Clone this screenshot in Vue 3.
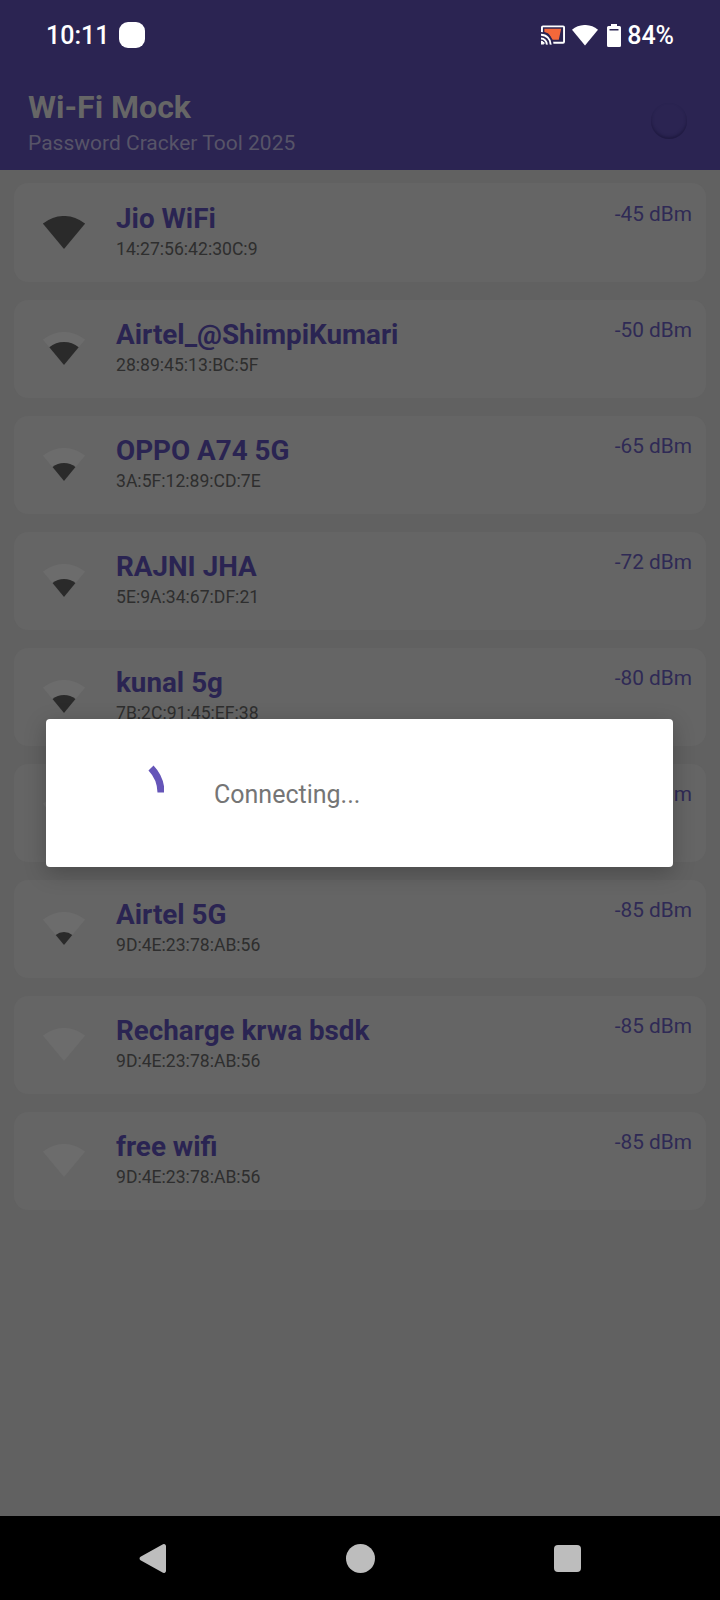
<script setup>
const networks = [
  { name: 'Jio WiFi', mac: '14:27:56:42:30C:9', dbm: -45, level: 33 },
  { name: 'Airtel_@ShimpiKumari', mac: '28:89:45:13:BC:5F', dbm: -50, level: 23 },
  { name: 'OPPO A74 5G', mac: '3A:5F:12:89:CD:7E', dbm: -65, level: 18 },
  { name: 'RAJNI JHA', mac: '5E:9A:34:67:DF:21', dbm: -72, level: 18 },
  { name: 'kunal 5g', mac: '7B:2C:91:45:EF:38', dbm: -80, level: 18 },
  { name: 'Airtel 4G', mac: '9D:4E:23:78:AB:56', dbm: -85, level: 18 },
  { name: 'Airtel 5G', mac: '9D:4E:23:78:AB:56', dbm: -85, level: 13 },
  { name: 'Recharge krwa bsdk', mac: '9D:4E:23:78:AB:56', dbm: -85, level: 0 },
  { name: 'free wifi', mac: '9D:4E:23:78:AB:56', dbm: -85, level: 0 },
];

// fan shape from the bottom tip, r is how far up it reaches
function wedge(r) {
  const dx = (r * 0.64).toFixed(1);
  const dy = (r * 0.77).toFixed(1);
  return `M21 33 L${21 - dx} ${33 - dy} A${r} ${r} 0 0 1 ${21 + Number(dx)} ${33 - dy} Z`;
}
</script>

<template>
  <div class="screen">
    <header class="top">
      <div class="status">
        <span class="time">10:11</span>
        <span class="blob"></span>
        <span class="spacer"></span>
        <svg class="cast" width="24" height="20" viewBox="0 0 25 20">
          <rect x="1" y="1" width="23" height="17" rx="1" fill="none" stroke="#fff" stroke-width="2" />
          <path d="M3.500 3.500 H21 L18.500 15 H11 C10 10 8 8 3.500 7 Z" fill="#f4683a" />
          <path d="M0 13.500 A6.500 6.500 0 0 1 6.500 20 M0 9.500 A10.500 10.500 0 0 1 10.500 20" fill="none" stroke="#2b2452" stroke-width="5" />
          <path d="M0 17 A3 3 0 0 1 3 20 H0 Z" fill="#fff" />
          <path d="M0 13.700 A6 6 0 0 1 6 20 M0 9.700 A10 10 0 0 1 10 20" fill="none" stroke="#fff" stroke-width="2" />
        </svg>
        <svg class="wifi" width="26" height="21" viewBox="0 0 42 34">
          <path :d="wedge(33)" fill="#fff" />
        </svg>
        <svg class="battery" width="14" height="23" viewBox="0 0 14 23">
          <path d="M4 0 H10 V2 H12.500 A1.500 1.500 0 0 1 14 3.500 V21.500 A1.500 1.500 0 0 1 12.500 23 H1.500 A1.500 1.500 0 0 1 0 21.500 V3.500 A1.500 1.500 0 0 1 1.500 2 H4 Z" fill="#fff" />
          <rect x="2.500" y="5" width="9" height="1.500" fill="#2b2452" />
        </svg>
        <span class="percent">84%</span>
      </div>
      <div class="appbar">
        <div>
          <h1 class="title">Wi-Fi Mock</h1>
          <p class="subtitle">Password Cracker Tool 2025</p>
        </div>
        <span class="toggle"></span>
      </div>
    </header>

    <main class="list">
      <div class="card" v-for="net in networks" :key="net.name">
        <svg class="signal" width="42" height="34" viewBox="0 0 42 34">
          <path :d="wedge(33)" fill="#6c6c6c" />
          <path v-if="net.level" :d="wedge(net.level)" fill="#2a2a2a" />
        </svg>
        <div class="info">
          <div class="name">{{ net.name }}</div>
          <div class="mac">{{ net.mac }}</div>
        </div>
        <div class="dbm">{{ net.dbm }} dBm</div>
      </div>
    </main>

    <nav class="nav">
      <svg width="27" height="29" viewBox="0 0 27 29">
        <path d="M1.500 12.800 L23.500 0.500 A2.200 2.200 0 0 1 27 2.500 V26.500 A2.200 2.200 0 0 1 23.500 28.500 L1.500 16.200 A2 2 0 0 1 1.500 12.800 Z" fill="#bdbdbd" />
      </svg>
      <span class="home"></span>
      <span class="recents"></span>
    </nav>

    <div class="dialog">
      <svg class="spinner" width="78" height="78" viewBox="0 0 78 78">
        <path d="M65 14 A36 36 0 0 1 75 38.500" fill="none" stroke="#6555b8" stroke-width="7" />
      </svg>
      <span class="connecting">Connecting...</span>
    </div>
  </div>
</template>

<style>
html,
body {
  margin: 0;
  background: #616161;
}
</style>

<style scoped>
.screen {
  position: relative;
  display: flex;
  flex-direction: column;
  width: 720px;
  height: 1600px;
  overflow: hidden;
  background: #616161;
  font-family: Roboto, "Liberation Sans", sans-serif;
}

.top {
  height: 170px;
  background: #2b2452;
}

.status {
  display: flex;
  align-items: center;
  height: 70px;
  padding: 0 46px 0 46px;
  color: #fff;
  font-size: 25px;
  font-weight: 500;
}

.blob {
  width: 26px;
  height: 26px;
  margin-left: 10px;
  border-radius: 9px;
  background: #fff;
}

.spacer {
  flex: 1;
}

.wifi {
  margin-left: 7px;
}

.battery {
  margin-left: 9px;
}

.percent {
  margin-left: 6px;
}

.appbar {
  display: flex;
  justify-content: space-between;
  padding: 18px 33px 0 28px;
}

.title {
  margin: 0;
  color: #666;
  font-size: 32px;
  line-height: 38px;
  font-weight: 700;
}

.subtitle {
  margin: 4px 0 0;
  color: #575468;
  font-size: 21px;
  line-height: 26px;
}

.toggle {
  width: 36px;
  height: 36px;
  margin-top: 15px;
  border-radius: 50%;
  box-shadow: inset 0 -2px 3px rgba(20, 16, 50, 0.55);
}

.list {
  flex: 1;
  display: flex;
  flex-direction: column;
  gap: 18px;
  padding: 13px 14px 0;
}

.card {
  display: flex;
  align-items: flex-start;
  height: 98px;
  border-radius: 14px;
  background: #656565;
}

.card:first-child {
  height: 99px;
}

.card:first-child .info {
  padding-top: 20px;
}

.card:first-child .dbm {
  padding-top: 20px;
}

.signal {
  align-self: center;
  margin: 0 31px 0 29px;
}

.info {
  flex: 1;
  padding-top: 19px;
}

.name {
  color: #2a2452;
  font-size: 27.8px;
  line-height: 32px;
  font-weight: 700;
}

.mac {
  margin-top: 3px;
  color: #2e2e2e;
  font-size: 17.6px;
  line-height: 22px;
}

.dbm {
  padding: 19px 14px 0 0;
  color: #2f2a55;
  font-size: 20.8px;
  line-height: 22px;
}

.nav {
  display: flex;
  align-items: center;
  justify-content: space-between;
  height: 84px;
  padding: 0 139px;
  background: #000;
}

.home {
  width: 29px;
  height: 29px;
  border-radius: 50%;
  background: #bdbdbd;
}

.recents {
  width: 27px;
  height: 27px;
  border-radius: 4px;
  background: #bdbdbd;
}

.dialog {
  position: absolute;
  left: 46px;
  top: 719px;
  width: 627px;
  height: 148px;
  display: flex;
  align-items: center;
  padding-left: 40px;
  box-sizing: border-box;
  border-radius: 4px;
  background: #fff;
  box-shadow: 0 6px 22px rgba(0, 0, 0, 0.24);
}

.spinner {
  flex: none;
}

.connecting {
  margin-left: 50px;
  padding-top: 2px;
  color: #757575;
  font-size: 25px;
}
</style>
